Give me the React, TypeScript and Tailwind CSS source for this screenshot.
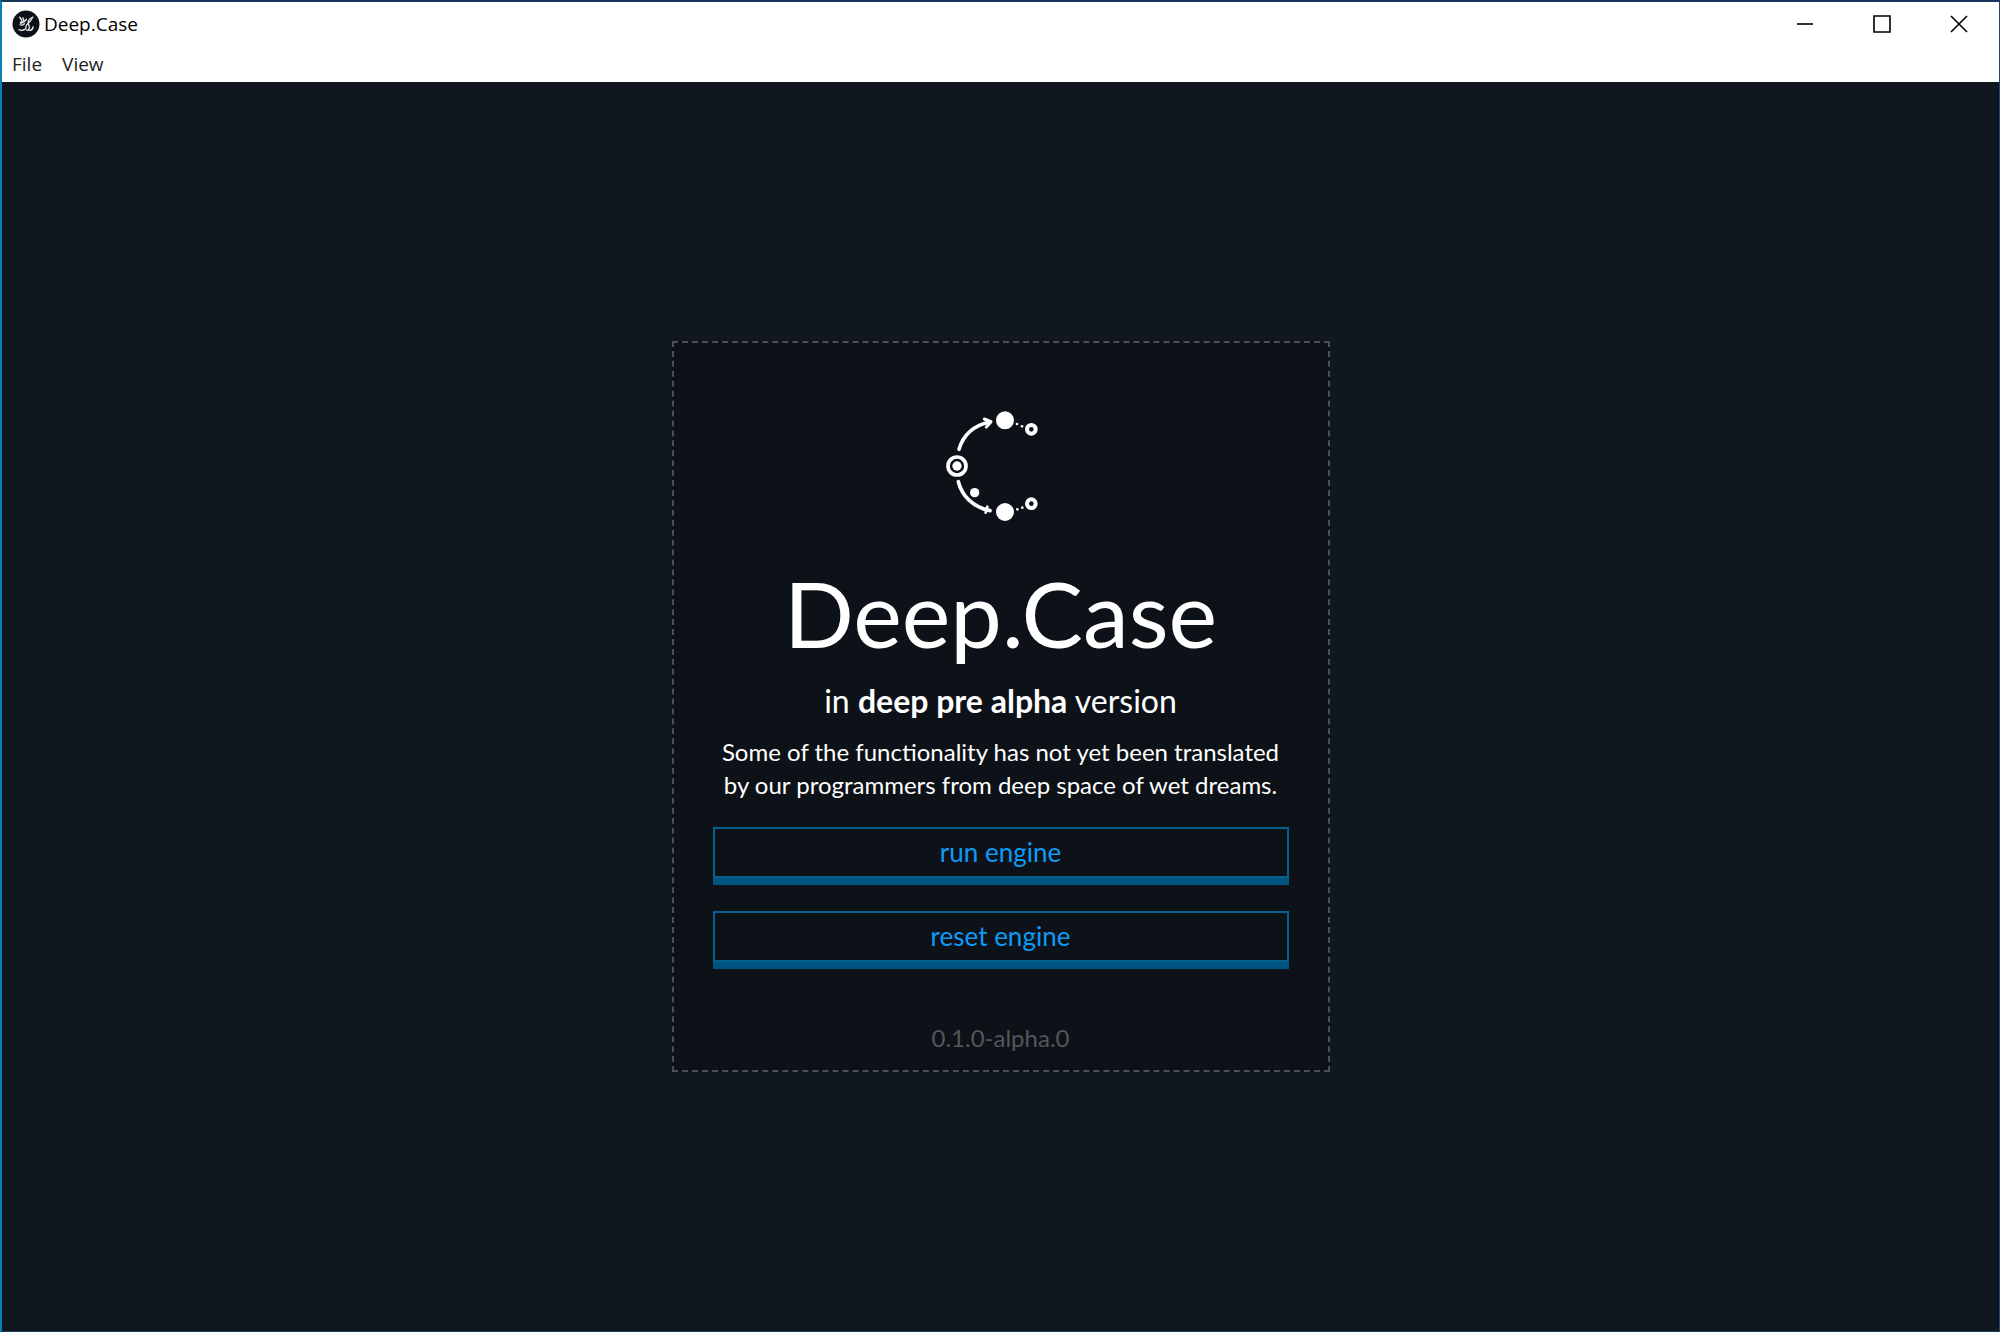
import type { ReactNode } from "react";

function AppBadge() {
  return (
    <svg viewBox="0 0 108 108" className="size-7 shrink-0" aria-hidden="true">
      <circle cx="54" cy="54" r="52" fill="#0d1219" />
      <g fill="none" stroke="#e5e7eb" strokeWidth="5" strokeLinecap="round" strokeLinejoin="round">
        <path d="M30 28c2 7 9 8 8 14-1 4-5 5-5 9 4-2 8-2 12-5 4-4 8-5 10-10" strokeWidth="6" />
        <path d="M42 30l4 12M31 57c6 3 12 1 17-4" />
        <path d="M27 76c8 4 20 3 25-4 3-5 1-10 5-15 6-7 13-12 16-18 2-4 4-8 7-11" />
        <path d="M80 28c-9 3-17 10-18 19-1 8 6 12 5 21-1 7-7 11-12 9" />
        <path d="M66 78c8 1 14-4 15-12" strokeWidth="6" />
      </g>
    </svg>
  );
}

function OrbitLogo() {
  return (
    <svg viewBox="0 0 480 450" className="mr-0.5 h-[150px] w-40" role="img" aria-label="Deep.Case logo">
      <g fill="none" stroke="#fff" strokeWidth="11" strokeLinecap="round" strokeLinejoin="round">
        <path d="M117 181C128 143 156 111 208 99" />
        <path d="M193 90l20 8-14 16" strokeWidth="9" />
        <path d="M115 278C126 320 158 355 210 365" />
        <path d="M202 353l-5 18" strokeWidth="8" />
      </g>
      <circle cx="111" cy="231" r="27" fill="none" stroke="#fff" strokeWidth="11" />
      <g fill="#fff">
        <circle cx="111" cy="231" r="14" />
        <circle cx="255" cy="94" r="27" />
        <circle cx="255" cy="369" r="27" />
        <circle cx="164" cy="311" r="14" />
        <circle cx="291" cy="105" r="4" />
        <circle cx="306" cy="112" r="4" />
        <circle cx="292" cy="361" r="4" />
        <circle cx="307" cy="356" r="4" />
      </g>
      <g fill="none" stroke="#fff" strokeWidth="12">
        <circle cx="334" cy="121" r="13" />
        <circle cx="334" cy="344" r="13" />
      </g>
    </svg>
  );
}

function WindowButton({ label, children }: { label: string; children: ReactNode }) {
  return (
    <button type="button" aria-label={label} className="flex h-full w-[77px] items-center justify-center">
      <svg viewBox="0 0 18 18" className="size-[18px]" fill="none" stroke="#000" strokeWidth="1.6">
        {children}
      </svg>
    </button>
  );
}

function EngineButton({ children }: { children: ReactNode }) {
  return (
    <button
      type="button"
      className="h-[51px] w-full border-2 border-[#046091] pb-0.5 text-[26px] leading-8 text-[#0d9bf5] shadow-[0_7px_0_#00547f]"
    >
      {children}
    </button>
  );
}

export default function App() {
  return (
    <div className="flex min-h-screen flex-col border-t-2 border-r border-b border-l-2 border-t-[#17375f] border-r-[#24466e] border-b-[#17405c] border-l-[#0680b5] bg-[#10171f] font-['Lato',sans-serif]">
      <header className="bg-white font-['Open_Sans',sans-serif] text-black">
        <div className="flex h-11 items-center justify-between">
          <div className="flex items-center gap-1 pl-2.5">
            <AppBadge />
            <h1 className="text-[19px]">Deep.Case</h1>
          </div>
          <div className="flex h-full pr-0.5">
            <WindowButton label="Minimize">
              <path d="M1 9h16" />
            </WindowButton>
            <WindowButton label="Maximize">
              <path d="M1 1h16v16H1z" />
            </WindowButton>
            <WindowButton label="Close">
              <path d="M1 1l16 16M17 1L1 17" />
            </WindowButton>
          </div>
        </div>
        <nav className="flex h-9 items-center gap-5 pl-2.5 text-[19px] text-[#222]">
          <button type="button">File</button>
          <button type="button">View</button>
        </nav>
      </header>

      <main className="flex grow items-center justify-center">
        <section className="flex w-[658px] flex-col items-center border-2 border-dashed border-[#4c4f54] bg-[#0d1218] px-[39px] pt-[46px] pb-3 text-center text-white">
          <OrbitLogo />
          <h2 className="mt-5 text-[92px] leading-[108px] font-normal">Deep.Case</h2>
          <p className="mt-4 text-[32px] leading-9">
            in <b className="font-bold">deep pre alpha</b> version
          </p>
          <p className="mt-4 text-2xl leading-[33px]">
            Some of the functionality has not yet been translated
            <br />
            by our programmers from deep space of wet dreams.
          </p>
          <div className="mt-[26px] flex w-full flex-col gap-[33px]">
            <EngineButton>run engine</EngineButton>
            <EngineButton>reset engine</EngineButton>
          </div>
          <p className="mt-14 text-2xl leading-10 text-[#54565b]">0.1.0-alpha.0</p>
        </section>
      </main>
    </div>
  );
}
